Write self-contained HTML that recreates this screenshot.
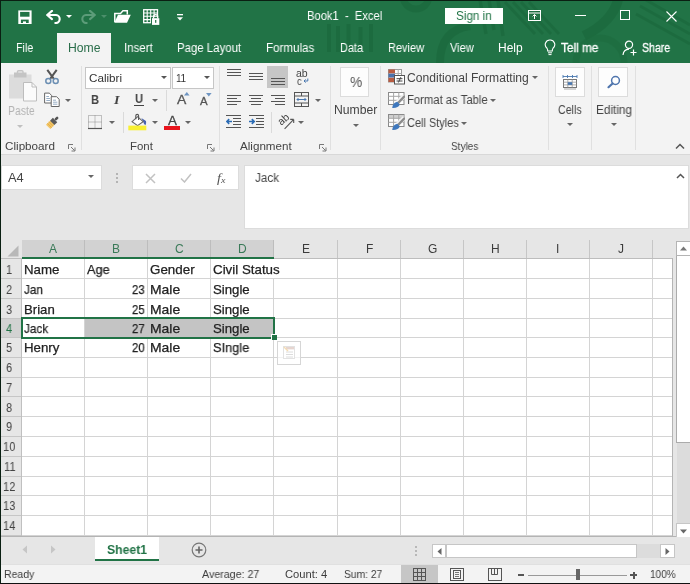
<!DOCTYPE html>
<html><head><meta charset="utf-8"><title>Book1 - Excel</title>
<style>
html,body{margin:0;padding:0;}
body{width:690px;height:584px;position:relative;overflow:hidden;background:#e6e6e6;font-family:"Liberation Sans",sans-serif;}
.r{position:absolute;display:block;}
.t{position:absolute;will-change:transform;white-space:pre;line-height:16px;transform-origin:0 50%;}
</style></head><body>
<div class="r" style="left:0px;top:0px;width:690px;height:63px;background:#217346;"></div>
<svg class="r" style="left:0;top:0" width="690" height="63" viewBox="0 0 690 63"><g stroke="#1a673b" fill="none" opacity="0.6"><path d="M329 24V52M338 26V52M348.5 24V52M360.500 27V52M371 24V52" stroke-width="4"/><path d="M480 0L486 34M489 0L494 30M498 0L503 36" stroke-width="3.5"/><path d="M505 2L535 34M513 2L543 34M521 2L551 34M529 2L559 34" stroke-width="3"/><path d="M618 0Q612 22 584 36" stroke-width="10"/><path d="M640 6L690 34M646 0L690 25M636 14L690 44" stroke-width="3"/><circle cx="416" cy="-4" r="13" stroke-width="7"/><path d="M440 63Q440 30 470 26" stroke-width="8"/><circle cx="600" cy="62" r="24" stroke-width="7" opacity=".6"/></g></svg>
<div class="r" style="left:57px;top:33px;width:54px;height:30px;background:#f3f3f3;"></div>
<span class="t" style="left:16.30px;top:40.00px;font-size:12px;color:#fff;transform:scaleX(0.8895);">File</span>
<span class="t" style="left:67.70px;top:40.00px;font-size:12px;color:#2a6e4a;transform:scaleX(1.0153);">Home</span>
<span class="t" style="left:124.00px;top:40.00px;font-size:12px;color:#fff;transform:scaleX(0.9562);">Insert</span>
<span class="t" style="left:177.30px;top:40.00px;font-size:12px;color:#fff;transform:scaleX(0.9511);">Page Layout</span>
<span class="t" style="left:266.00px;top:40.00px;font-size:12px;color:#fff;transform:scaleX(0.9658);">Formulas</span>
<span class="t" style="left:340.00px;top:40.00px;font-size:12px;color:#fff;transform:scaleX(0.9073);">Data</span>
<span class="t" style="left:388.00px;top:40.00px;font-size:12px;color:#fff;transform:scaleX(0.9149);">Review</span>
<span class="t" style="left:449.60px;top:40.00px;font-size:12px;color:#fff;transform:scaleX(0.9188);">View</span>
<span class="t" style="left:497.80px;top:40.00px;font-size:12px;color:#fff;transform:scaleX(0.9927);">Help</span>
<span class="t" style="left:561.00px;top:40.00px;font-size:12px;color:#fff;transform:scaleX(0.9839);-webkit-text-stroke:0.3px #fff;">Tell me</span>
<span class="t" style="left:641.80px;top:40.00px;font-size:12px;color:#fff;transform:scaleX(0.8806);-webkit-text-stroke:0.3px #fff;">Share</span>
<span class="t" style="left:306.70px;top:8.20px;font-size:12px;color:#fff;transform:scaleX(0.9330);">Book1  -  Excel</span>
<div class="r" style="left:445px;top:8px;width:58px;height:16px;background:#fff;"></div>
<span class="t" style="left:455.60px;top:7.80px;font-size:12px;color:#217346;transform:scaleX(0.9756);">Sign in</span>
<svg class="r" style="left:18px;top:9.5px;" width="14" height="14.5" viewBox="0 0 14 14.5"><rect x="0.3" y="0.4" width="13.3" height="13.7" fill="#fff"/><rect x="2.1" y="1.9" width="9.4" height="4.8" fill="#217346"/><rect x="2.9" y="9.6" width="7.8" height="3.4" fill="#217346"/><rect x="5" y="11.4" width="3" height="1.6" fill="#fff"/></svg>
<svg class="r" style="left:46px;top:9.5px;" width="15" height="14" viewBox="0 0 15 14"><path d="M1.2 5L6 0.9M1.2 5L6 9.1M1.5 5H10A4 4 0 0 1 9.3 13" fill="none" stroke="#fff" stroke-width="2.1" stroke-linecap="round"/></svg>
<svg class="r" style="left:65.5px;top:14.5px;" width="6" height="3" viewBox="0 0 6 3"><path d="M0 0H6L3.0 3Z" fill="#fff"/></svg>
<svg class="r" style="left:80.5px;top:9.5px;" width="15" height="14" viewBox="0 0 15 14"><path d="M13.8 5L9 0.9M13.8 5L9 9.1M13.5 5H5A4 4 0 0 0 5.700 13" fill="none" stroke="#5c9c79" stroke-width="2.1" stroke-linecap="round"/></svg>
<svg class="r" style="left:100.5px;top:14.5px;" width="6" height="3" viewBox="0 0 6 3"><path d="M0 0H6L3.0 3Z" fill="#4c8f6b"/></svg>
<svg class="r" style="left:114px;top:10px;" width="17" height="13" viewBox="0 0 17 13"><path d="M0.8 12V3.400H6.500L9 0.8H13.300V4.500" fill="none" stroke="#fff" stroke-width="1.5"/><path d="M0.3 12.7L4 4.8H16.800L13 12.7Z" fill="#fff"/></svg>
<svg class="r" style="left:143px;top:9px;" width="17" height="16" viewBox="0 0 17 16"><rect x="0.7" y="0.7" width="13.800" height="13" fill="none" stroke="#fff" stroke-width="1.3"/><path d="M0.7 4H14.500M0.7 7.300H14.500M0.7 10.600H9.500M4.200 0.7V13.700M7.700 0.7V13.700M11.100 0.7V8" stroke="#fff" stroke-width="1.1" fill="none"/><rect x="8" y="8.200" width="9" height="7.800" fill="#217346"/><rect x="9" y="9.200" width="7.300" height="6.700" fill="#fff"/><path d="M10.600 9.500V7.600A2 2 0 0 1 14.700 7.600V9.500" fill="none" stroke="#fff" stroke-width="1.3"/><rect x="12.100" y="11" width="1.200" height="2.800" fill="#217346"/></svg>
<svg class="r" style="left:177px;top:13.5px;" width="6" height="7" viewBox="0 0 6 7"><rect x="0" y="0" width="6" height="1.3" fill="#fff"/><path d="M0 3.2H6L3 6.5Z" fill="#fff"/></svg>
<svg class="r" style="left:528px;top:10px;" width="14" height="12" viewBox="0 0 14 12"><rect x="0.5" y="0.5" width="12" height="10" fill="none" stroke="#fff"/><path d="M0.5 3H12.5" stroke="#fff"/><path d="M6.5 9V4.6M4.6 6.4L6.5 4.5L8.4 6.4" fill="none" stroke="#fff"/></svg>
<div class="r" style="left:575px;top:15px;width:11px;height:1px;background:#fff;"></div>
<div class="r" style="left:620px;top:10px;width:10px;height:10px;background:transparent;border:1px solid #fff;box-sizing:border-box;"></div>
<svg class="r" style="left:665.5px;top:10.5px;" width="11" height="11" viewBox="0 0 11 11"><path d="M0.5 0.5L10.5 10.5M10.5 0.5L0.5 10.5" stroke="#fff" stroke-width="1.1"/></svg>
<svg class="r" style="left:544px;top:39px;" width="12" height="17" viewBox="0 0 12 17"><path d="M6 1A4.6 4.6 0 0 1 9 9.2Q8.3 10.2 8.3 12H3.7Q3.7 10.2 3 9.2A4.6 4.6 0 0 1 6 1Z" fill="none" stroke="#fff" stroke-width="1.1"/><path d="M4 13.8H8M4.5 15.6H7.5" stroke="#fff" stroke-width="1"/></svg>
<svg class="r" style="left:622px;top:40px;" width="16" height="16" viewBox="0 0 16 16"><circle cx="7" cy="4.8" r="3.6" fill="none" stroke="#fff" stroke-width="1.2"/><path d="M1 15Q1.5 9.5 7 9.2" fill="none" stroke="#fff" stroke-width="1.2"/><path d="M11.5 9.5V15.5M8.5 12.5H14.5" stroke="#fff" stroke-width="1.2"/></svg>
<div class="r" style="left:0px;top:63px;width:690px;height:91px;background:#f3f3f3;"></div>
<div class="r" style="left:0px;top:154px;width:690px;height:1px;background:#d8d8d8;"></div>
<div class="r" style="left:81px;top:66px;width:1px;height:84px;background:#e0e0e0;"></div>
<div class="r" style="left:219px;top:66px;width:1px;height:84px;background:#e0e0e0;"></div>
<div class="r" style="left:330px;top:66px;width:1px;height:84px;background:#e0e0e0;"></div>
<div class="r" style="left:380px;top:66px;width:1px;height:84px;background:#e0e0e0;"></div>
<div class="r" style="left:548px;top:66px;width:1px;height:84px;background:#e0e0e0;"></div>
<div class="r" style="left:591px;top:66px;width:1px;height:84px;background:#e0e0e0;"></div>
<div class="r" style="left:635px;top:66px;width:1px;height:84px;background:#e0e0e0;"></div>
<span class="t" style="left:5.00px;top:137.94px;font-size:11px;color:#444;transform:scaleX(1.0619);">Clipboard</span>
<span class="t" style="left:129.70px;top:137.94px;font-size:11px;color:#444;transform:scaleX(1.0404);">Font</span>
<span class="t" style="left:240.00px;top:137.94px;font-size:11px;color:#444;transform:scaleX(1.0569);">Alignment</span>
<span class="t" style="left:450.70px;top:137.94px;font-size:11px;color:#444;transform:scaleX(0.9114);">Styles</span>
<svg class="r" style="left:68.0px;top:143.5px;" width="8" height="8" viewBox="0 0 8 8"><path d="M0.5 5V0.5H5" fill="none" stroke="#777" stroke-width="1"/><path d="M3 3L6.5 6.5M7 3.5V7H3.5" fill="none" stroke="#777" stroke-width="1"/></svg>
<svg class="r" style="left:207.0px;top:143.5px;" width="8" height="8" viewBox="0 0 8 8"><path d="M0.5 5V0.5H5" fill="none" stroke="#777" stroke-width="1"/><path d="M3 3L6.5 6.5M7 3.5V7H3.5" fill="none" stroke="#777" stroke-width="1"/></svg>
<svg class="r" style="left:318.5px;top:143.5px;" width="8" height="8" viewBox="0 0 8 8"><path d="M0.5 5V0.5H5" fill="none" stroke="#777" stroke-width="1"/><path d="M3 3L6.5 6.5M7 3.5V7H3.5" fill="none" stroke="#777" stroke-width="1"/></svg>
<svg class="r" style="left:8px;top:70px;" width="30" height="32" viewBox="0 0 30 32"><rect x="1" y="4.5" width="22.5" height="24" fill="#dcdcdc"/><rect x="6" y="2.5" width="12.5" height="5" fill="#c4c4c4"/><rect x="9.5" y="0.8" width="5.5" height="3" rx="1" fill="none" stroke="#c4c4c4" stroke-width="1.4"/><path d="M15.5 12.5H24L28.5 17V31H15.5Z" fill="#fbfbfb" stroke="#bdbdbd" stroke-width="1"/><path d="M24 12.5V17H28.5" fill="none" stroke="#bdbdbd" stroke-width="1"/></svg>
<span class="t" style="left:8.10px;top:103.19px;font-size:12px;color:#b4b4b4;transform:scaleX(0.8701);">Paste</span>
<svg class="r" style="left:17.3px;top:124.5px;" width="6" height="3" viewBox="0 0 6 3"><path d="M0 0H6L3.0 3Z" fill="#c0c0c0"/></svg>
<svg class="r" style="left:44px;top:69px;" width="16" height="16" viewBox="0 0 16 16"><path d="M3.300 0.8L10.800 11.200M12.700 0.8L5.200 11.200" stroke="#555" stroke-width="2" fill="none"/><circle cx="4.300" cy="12.100" r="2.500" fill="#f3f3f3" stroke="#6c8fb3" stroke-width="1.500"/><circle cx="11.700" cy="12.100" r="2.500" fill="#f3f3f3" stroke="#6c8fb3" stroke-width="1.500"/></svg>
<svg class="r" style="left:44px;top:92px;" width="17" height="16" viewBox="0 0 17 16"><path d="M0.6 1.100H5.200L7.700 3.500V11H0.6Z" fill="#fff" stroke="#666" stroke-width="1"/><path d="M2.300 4.500H5M2.300 6.500H6M2.300 8.500H6" stroke="#7d99b8" stroke-width=".8"/><path d="M7.200 4.700H12.500L15.200 7.300V14.500H7.200Z" fill="#fff" stroke="#666" stroke-width="1"/><path d="M9 8.200H12M9 10.200H13.400M9 12.200H13.400" stroke="#7d99b8" stroke-width=".8"/></svg>
<svg class="r" style="left:65.3px;top:98.5px;" width="6" height="3" viewBox="0 0 6 3"><path d="M0 0H6L3.0 3Z" fill="#666"/></svg>
<svg class="r" style="left:45px;top:114px;" width="17" height="16" viewBox="0 0 17 16"><g transform="translate(8.300,7.800) rotate(-45)"><rect x="-7.200" y="-3.100" width="6" height="6.200" fill="#f2c566"/><path d="M-5.300 -3.100V3.100M-3.300 -3.100V3.100" stroke="#e3ab45" stroke-width=".8"/><rect x="-1.500" y="-3.100" width="4" height="6.200" fill="#5a5a5a"/><rect x="2.500" y="-1.300" width="4.200" height="2.600" rx="1.200" fill="#555"/></g></svg>
<div class="r" style="left:85px;top:67px;width:86px;height:22px;background:#fff;border:1px solid #c6c6c6;box-sizing:border-box;"></div>
<div class="r" style="left:172px;top:67px;width:42px;height:22px;background:#fff;border:1px solid #c6c6c6;box-sizing:border-box;"></div>
<span class="t" style="left:88.50px;top:70.34px;font-size:11px;color:#333;transform:scaleX(1.0618);">Calibri</span>
<span class="t" style="left:175.50px;top:70.34px;font-size:11px;color:#333;transform:scaleX(0.8757);">11</span>
<svg class="r" style="left:161.0px;top:76.0px;" width="6" height="3" viewBox="0 0 6 3"><path d="M0 0H6L3.0 3Z" fill="#555"/></svg>
<svg class="r" style="left:204.0px;top:76.0px;" width="6" height="3" viewBox="0 0 6 3"><path d="M0 0H6L3.0 3Z" fill="#555"/></svg>
<span class="t" style="left:91.00px;top:91.50px;font-size:13px;color:#444;transform:scaleX(0.8521);font-weight:bold;">B</span>
<span class="t" style="left:113.50px;top:91.50px;font-size:13px;color:#444;transform:scaleX(1.0871);font-weight:bold;font-style:italic;font-family:'Liberation Serif',serif;">I</span>
<span class="t" style="left:134.80px;top:90.99px;font-size:12px;color:#444;transform:scaleX(0.9346);font-weight:bold;">U</span>
<div class="r" style="left:134px;top:105px;width:10px;height:1px;background:#444;"></div>
<svg class="r" style="left:152.0px;top:98.5px;" width="6" height="3" viewBox="0 0 6 3"><path d="M0 0H6L3.0 3Z" fill="#666"/></svg>
<div class="r" style="left:166px;top:90px;width:1px;height:21px;background:#dadada;"></div>
<span class="t" style="left:177.00px;top:92.45px;font-size:13px;color:#555;transform:scaleX(1.0725);-webkit-text-stroke:0.3px #555;">A</span>
<svg class="r" style="left:184.4px;top:92.3px;" width="6" height="4" viewBox="0 0 6 4"><path d="M0 3.5H5.6L2.8 0Z" fill="#6f95c2"/></svg>
<span class="t" style="left:199.70px;top:93.14px;font-size:11px;color:#555;transform:scaleX(1.0359);-webkit-text-stroke:0.3px #555;">A</span>
<svg class="r" style="left:206.4px;top:92.5px;" width="6" height="4" viewBox="0 0 6 4"><path d="M0 0H5.6L2.8 3.5Z" fill="#6f95c2"/></svg>
<svg class="r" style="left:88px;top:115px;" width="15" height="15" viewBox="0 0 15 15"><rect x="0.5" y="0.5" width="13" height="13" fill="none" stroke="#8a8a8a" stroke-width="1" stroke-dasharray="1 1"/><path d="M7 0.5V13.5M0.5 7H13.5" stroke="#8a8a8a" stroke-width="1" stroke-dasharray="1 1"/><path d="M0 13.5H14" stroke="#555" stroke-width="1.2"/></svg>
<svg class="r" style="left:109.0px;top:121.0px;" width="6" height="3" viewBox="0 0 6 3"><path d="M0 0H6L3.0 3Z" fill="#666"/></svg>
<div class="r" style="left:123px;top:112px;width:1px;height:21px;background:#dadada;"></div>
<svg class="r" style="left:128px;top:113px;" width="19" height="19" viewBox="0 0 19 19"><path d="M13.400 5L18 8Q18.600 10.600 17.500 12.200Q15.500 11 15.100 8.600Z" fill="#4863b0"/><path d="M4.100 8.600L9.600 3.700L15.100 8.600L9.600 12.600Z" fill="#fff" stroke="#666" stroke-width="1.1"/><path d="M7.800 6.200V2.800A1.400 1.400 0 0 1 10.600 2.800V7" fill="none" stroke="#555" stroke-width="1.1"/><rect x="0.3" y="12.600" width="18" height="4.700" fill="#f8f032"/></svg>
<svg class="r" style="left:151.5px;top:121.0px;" width="6" height="3" viewBox="0 0 6 3"><path d="M0 0H6L3.0 3Z" fill="#666"/></svg>
<span class="t" style="left:167.50px;top:113.02px;font-size:12.5px;color:#444;transform:scaleX(1.0675);-webkit-text-stroke:0.3px #444;">A</span>
<div class="r" style="left:164px;top:125.5px;width:16px;height:4.6px;background:#e8141c;"></div>
<svg class="r" style="left:185.0px;top:121.0px;" width="6" height="3" viewBox="0 0 6 3"><path d="M0 0H6L3.0 3Z" fill="#666"/></svg>
<div class="r" style="left:227px;top:69px;width:14px;height:1px;background:#555;"></div>
<div class="r" style="left:227px;top:72px;width:14px;height:1px;background:#555;"></div>
<div class="r" style="left:227px;top:75px;width:14px;height:1px;background:#555;"></div>
<div class="r" style="left:249px;top:73px;width:14px;height:1px;background:#555;"></div>
<div class="r" style="left:249px;top:76px;width:14px;height:1px;background:#555;"></div>
<div class="r" style="left:249px;top:79px;width:14px;height:1px;background:#555;"></div>
<div class="r" style="left:267px;top:66px;width:21px;height:22px;background:#c6c6c6;"></div>
<div class="r" style="left:271px;top:78px;width:14px;height:1px;background:#555;"></div>
<div class="r" style="left:271px;top:81px;width:14px;height:1px;background:#555;"></div>
<div class="r" style="left:271px;top:84px;width:14px;height:1px;background:#555;"></div>
<span class="t" style="left:296.00px;top:65.31px;font-size:10.5px;color:#444;transform:scaleX(0.9761);">ab</span>
<span class="t" style="left:296.60px;top:72.51px;font-size:10.5px;color:#444;transform:scaleX(0.8762);">c</span>
<svg class="r" style="left:302.5px;top:78px;" width="6" height="6" viewBox="0 0 6 6"><path d="M4.800 0.5V3H1.2M2.600 1.400L1 3L2.600 4.600" fill="none" stroke="#4a78b0" stroke-width="1"/></svg>
<div class="r" style="left:227px;top:95px;width:14px;height:1px;background:#555;"></div>
<div class="r" style="left:227px;top:98px;width:10px;height:1px;background:#555;"></div>
<div class="r" style="left:227px;top:101px;width:14px;height:1px;background:#555;"></div>
<div class="r" style="left:227px;top:104px;width:10px;height:1px;background:#555;"></div>
<div class="r" style="left:249.0px;top:95px;width:14px;height:1px;background:#555;"></div>
<div class="r" style="left:251.0px;top:98px;width:10px;height:1px;background:#555;"></div>
<div class="r" style="left:249.0px;top:101px;width:14px;height:1px;background:#555;"></div>
<div class="r" style="left:251.0px;top:104px;width:10px;height:1px;background:#555;"></div>
<div class="r" style="left:271px;top:95px;width:14px;height:1px;background:#555;"></div>
<div class="r" style="left:275px;top:98px;width:10px;height:1px;background:#555;"></div>
<div class="r" style="left:271px;top:101px;width:14px;height:1px;background:#555;"></div>
<div class="r" style="left:275px;top:104px;width:10px;height:1px;background:#555;"></div>
<svg class="r" style="left:294px;top:92px;" width="15" height="15" viewBox="0 0 15 15"><rect x="0.5" y="0.5" width="14" height="14" fill="none" stroke="#555"/><path d="M0.5 4H14.5M0.5 11H14.5M7.5 0.5V4M7.5 11V14.5" stroke="#555" fill="none"/><path d="M3 7.5H12M4.5 6L3 7.5L4.5 9M10.5 6L12 7.5L10.5 9" stroke="#4a78b0" fill="none"/></svg>
<svg class="r" style="left:315.0px;top:98.5px;" width="6" height="3" viewBox="0 0 6 3"><path d="M0 0H6L3.0 3Z" fill="#666"/></svg>
<svg class="r" style="left:226px;top:115px;" width="15" height="13" viewBox="0 0 15 13"><path d="M0 0.5H15M7 3.5H15M7 6.5H15M7 9.5H15M0 12.5H15" stroke="#555" fill="none"/><path d="M6 6.5H1M3.2 4.2L0.8 6.5L3.2 8.8" stroke="#2b6cb5" stroke-width="1.6" fill="none"/></svg>
<svg class="r" style="left:248.5px;top:115px;" width="15" height="13" viewBox="0 0 15 13"><path d="M0 0.5H15M7 3.5H15M7 6.5H15M7 9.5H15M0 12.5H15" stroke="#555" fill="none"/><path d="M0 6.5H5M2.8 4.2L5.2 6.5L2.8 8.8" stroke="#2b6cb5" stroke-width="1.6" fill="none"/></svg>
<div class="r" style="left:271px;top:112px;width:1px;height:21px;background:#dadada;"></div>
<svg class="r" style="left:276px;top:112px;" width="20" height="19" viewBox="0 0 20 19"><text x="0" y="0" font-family="Liberation Sans, sans-serif" font-size="10.5" fill="#444" transform="translate(5.300,13.800) rotate(-42)">ab</text><path d="M8.600 16.800L17.500 7.600M17.700 7.400H14.200M17.700 7.400V10.900" stroke="#555" stroke-width="1.1" fill="none"/></svg>
<svg class="r" style="left:297.7px;top:121.0px;" width="6" height="3" viewBox="0 0 6 3"><path d="M0 0H6L3.0 3Z" fill="#666"/></svg>
<div class="r" style="left:340px;top:67px;width:29px;height:30px;background:#fdfdfd;border:1px solid #dcdcdc;box-sizing:border-box;"></div>
<span class="t" style="left:349.70px;top:74.00px;font-size:15px;color:#555;transform:scaleX(0.9222);">%</span>
<span class="t" style="left:334.00px;top:101.99px;font-size:12px;color:#444;transform:scaleX(1.0145);">Number</span>
<svg class="r" style="left:352.8px;top:123.5px;" width="6" height="3" viewBox="0 0 6 3"><path d="M0 0H6L3.0 3Z" fill="#666"/></svg>
<svg class="r" style="left:388px;top:69px;" width="17" height="17" viewBox="0 0 17 17"><rect x="0.5" y="0.5" width="13" height="12.5" fill="#fff" stroke="#9a9a9a"/><rect x="0.5" y="0.5" width="6.500" height="4" fill="#b95c42"/><rect x="0.5" y="4.600" width="6.500" height="4" fill="#4a72ad"/><rect x="0.5" y="8.800" width="6.500" height="4.200" fill="#b95c42"/><path d="M7 4.500H13.500M7 8.700H13.500M10.200 0.5V13" stroke="#b0b0b0" fill="none"/><rect x="6.500" y="6.500" width="10" height="8.500" fill="#fff" stroke="#555"/><path d="M8.500 9.700H14.500M8.500 12H14.500M12.800 8.200L10.400 13.500" stroke="#444" stroke-width="1" fill="none"/></svg>
<svg class="r" style="left:388px;top:91.5px;" width="17" height="17" viewBox="0 0 17 17"><rect x="0.5" y="0.5" width="15.500" height="12" fill="#fff" stroke="#8a8a8a"/><path d="M0.5 4.300H16M0.5 8.300H16M5.600 0.5V12.500M10.800 0.5V12.500" stroke="#a6a6a6" fill="none"/><path d="M9.500 10.500L16.300 3.800" stroke="#f3f3f3" stroke-width="4.500"/><path d="M10 11L16.200 4.600" stroke="#8c8c8c" stroke-width="2.400" stroke-linecap="round"/><path d="M4.200 16Q4.800 10.800 9.200 9.800L11.800 12.600Q10.500 16.300 4.200 16Z" fill="#3f78bd"/></svg>
<svg class="r" style="left:388px;top:114px;" width="17" height="17" viewBox="0 0 17 17"><rect x="0.5" y="0.5" width="15.500" height="12" fill="#fff" stroke="#8a8a8a"/><rect x="1" y="1" width="14.500" height="3" fill="#d0d0d0"/><path d="M0.5 4.300H16M0.5 8.300H16M5.600 0.5V12.500M10.800 0.5V12.500" stroke="#a6a6a6" fill="none"/><path d="M9.500 10.500L16.300 3.800" stroke="#f3f3f3" stroke-width="4.500"/><path d="M10 11L16.200 4.600" stroke="#8c8c8c" stroke-width="2.400" stroke-linecap="round"/><path d="M4.200 16Q4.800 10.800 9.200 9.800L11.800 12.600Q10.500 16.300 4.200 16Z" fill="#3f78bd"/></svg>
<span class="t" style="left:407.00px;top:69.50px;font-size:12px;color:#444;transform:scaleX(1.0088);">Conditional Formatting</span>
<span class="t" style="left:407.00px;top:92.00px;font-size:12px;color:#444;transform:scaleX(0.9392);">Format as Table</span>
<span class="t" style="left:407.00px;top:114.80px;font-size:12px;color:#444;transform:scaleX(0.9138);">Cell Styles</span>
<svg class="r" style="left:531.5px;top:76.0px;" width="6" height="3" viewBox="0 0 6 3"><path d="M0 0H6L3.0 3Z" fill="#666"/></svg>
<svg class="r" style="left:489.7px;top:98.5px;" width="6" height="3" viewBox="0 0 6 3"><path d="M0 0H6L3.0 3Z" fill="#666"/></svg>
<svg class="r" style="left:461.3px;top:121.5px;" width="6" height="3" viewBox="0 0 6 3"><path d="M0 0H6L3.0 3Z" fill="#666"/></svg>
<div class="r" style="left:555px;top:67px;width:30px;height:30px;background:#fdfdfd;border:1px solid #dcdcdc;box-sizing:border-box;"></div>
<div class="r" style="left:598px;top:67px;width:30px;height:30px;background:#fdfdfd;border:1px solid #dcdcdc;box-sizing:border-box;"></div>
<svg class="r" style="left:562px;top:74px;" width="16" height="16" viewBox="0 0 16 16"><path d="M1 2.5H15M1 1V4M15 1V4M5.5 1V4M10.5 1V4" stroke="#4a78b0" stroke-width=".9" fill="none"/><rect x="1.5" y="5.5" width="13" height="8" fill="#fff" stroke="#777"/><path d="M1.5 8.2H14.5M1.5 10.9H14.5M5.8 5.5V13.5M10.2 5.5V13.5" stroke="#999" stroke-width=".8"/><rect x="5.8" y="8.2" width="4.4" height="2.7" fill="#4a78b0"/><path d="M2 15H14" stroke="#aaa"/></svg>
<svg class="r" style="left:605px;top:74px;" width="16" height="16" viewBox="0 0 16 16"><circle cx="10.5" cy="6.500" r="3.9" fill="#fff" stroke="#4f75ad" stroke-width="1.5"/><path d="M7.600 9.500L3.500 13.200" stroke="#4f75ad" stroke-width="2.2" stroke-linecap="round"/></svg>
<span class="t" style="left:558.30px;top:101.99px;font-size:12px;color:#444;transform:scaleX(0.8885);">Cells</span>
<span class="t" style="left:595.60px;top:101.99px;font-size:12px;color:#444;transform:scaleX(0.9811);">Editing</span>
<svg class="r" style="left:567.0px;top:123.0px;" width="6" height="3" viewBox="0 0 6 3"><path d="M0 0H6L3.0 3Z" fill="#666"/></svg>
<svg class="r" style="left:610.5px;top:123.0px;" width="6" height="3" viewBox="0 0 6 3"><path d="M0 0H6L3.0 3Z" fill="#666"/></svg>
<svg class="r" style="left:675px;top:143px;" width="10" height="7" viewBox="0 0 10 7"><path d="M1 5.5L5 1.5L9 5.5" stroke="#555" stroke-width="1.5" fill="none"/></svg>
<div class="r" style="left:0px;top:155px;width:690px;height:85px;background:#e6e6e6;"></div>
<div class="r" style="left:1px;top:165px;width:101px;height:25px;background:#fff;border:1px solid #dcdcdc;box-sizing:border-box;"></div>
<span class="t" style="left:8.00px;top:170.30px;font-size:12px;color:#444;transform:scaleX(1.0696);">A4</span>
<svg class="r" style="left:88.0px;top:175.0px;" width="6" height="3" viewBox="0 0 6 3"><path d="M0 0H6L3.0 3Z" fill="#666"/></svg>
<div class="r" style="left:116px;top:173px;width:1.5px;height:1.5px;background:#b4b4b4;"></div>
<div class="r" style="left:116px;top:177px;width:1.5px;height:1.5px;background:#b4b4b4;"></div>
<div class="r" style="left:116px;top:181px;width:1.5px;height:1.5px;background:#b4b4b4;"></div>
<div class="r" style="left:132px;top:165px;width:107px;height:25px;background:#fff;border:1px solid #dcdcdc;box-sizing:border-box;"></div>
<svg class="r" style="left:144.5px;top:172.5px;" width="11" height="11" viewBox="0 0 11 11"><path d="M1 1L10 10M10 1L1 10" stroke="#c2c2c2" stroke-width="1.5"/></svg>
<svg class="r" style="left:180px;top:173px;" width="12" height="10" viewBox="0 0 12 10"><path d="M1 5.5L4.5 9L11 1" stroke="#c2c2c2" stroke-width="1.5" fill="none"/></svg>
<span class="t" style="left:217.00px;top:169.50px;font-size:13px;color:#555;transform:scaleX(1.1075);font-style:italic;font-family:'Liberation Serif',serif;">f</span>
<span class="t" style="left:221.00px;top:172.00px;font-size:9px;color:#555;transform:scaleX(1.1265);font-style:italic;font-family:'Liberation Serif',serif;">x</span>
<div class="r" style="left:244px;top:165px;width:445px;height:64px;background:#fff;border:1px solid #dcdcdc;box-sizing:border-box;"></div>
<span class="t" style="left:255.00px;top:170.00px;font-size:12.5px;color:#444;transform:scaleX(0.9338);">Jack</span>
<svg class="r" style="left:675.5px;top:173px;" width="9" height="6" viewBox="0 0 9 6"><path d="M1 5L4.5 1.5L8 5" stroke="#555" stroke-width="1.5" fill="none"/></svg>
<div class="r" style="left:1px;top:240px;width:672px;height:297px;background:#fff;"></div>
<div class="r" style="left:1px;top:240px;width:672px;height:18px;background:#e6e6e6;"></div>
<div class="r" style="left:1px;top:259px;width:20px;height:277px;background:#e6e6e6;"></div>
<div class="r" style="left:22px;top:240px;width:251px;height:18px;background:#d2d2d2;"></div>
<div class="r" style="left:1px;top:319px;width:20px;height:18px;background:#d2d2d2;"></div>
<svg class="r" style="left:7px;top:245px;" width="12" height="12" viewBox="0 0 12 12"><path d="M11.5 0.5V11.5H0.5Z" fill="#b8b8b8"/></svg>
<span class="t" style="left:49.20px;top:241.30px;font-size:12px;color:#3a7a58;transform:scaleX(0.9500);">A</span>
<span class="t" style="left:112.20px;top:241.30px;font-size:12px;color:#3a7a58;transform:scaleX(0.9500);">B</span>
<span class="t" style="left:174.88px;top:241.30px;font-size:12px;color:#3a7a58;transform:scaleX(0.9500);">C</span>
<span class="t" style="left:237.88px;top:241.30px;font-size:12px;color:#3a7a58;transform:scaleX(0.9500);">D</span>
<span class="t" style="left:301.70px;top:241.30px;font-size:12px;color:#3c3c3c;transform:scaleX(0.9500);">E</span>
<span class="t" style="left:365.52px;top:241.30px;font-size:12px;color:#3c3c3c;transform:scaleX(0.9500);">F</span>
<span class="t" style="left:427.57px;top:241.30px;font-size:12px;color:#3c3c3c;transform:scaleX(0.9500);">G</span>
<span class="t" style="left:490.88px;top:241.30px;font-size:12px;color:#3c3c3c;transform:scaleX(0.9500);">H</span>
<span class="t" style="left:556.42px;top:241.30px;font-size:12px;color:#3c3c3c;transform:scaleX(0.9500);">I</span>
<span class="t" style="left:618.15px;top:241.30px;font-size:12px;color:#3c3c3c;transform:scaleX(0.9500);">J</span>
<span class="t" style="left:5.78px;top:261.65px;font-size:13px;color:#444;transform:scaleX(0.8600);">1</span>
<span class="t" style="left:5.78px;top:281.65px;font-size:13px;color:#444;transform:scaleX(0.8600);">2</span>
<span class="t" style="left:5.78px;top:301.65px;font-size:13px;color:#444;transform:scaleX(0.8600);">3</span>
<span class="t" style="left:5.78px;top:320.65px;font-size:13px;color:#217346;transform:scaleX(0.8600);">4</span>
<span class="t" style="left:5.78px;top:339.65px;font-size:13px;color:#444;transform:scaleX(0.8600);">5</span>
<span class="t" style="left:5.78px;top:359.65px;font-size:13px;color:#444;transform:scaleX(0.8600);">6</span>
<span class="t" style="left:5.78px;top:379.65px;font-size:13px;color:#444;transform:scaleX(0.8600);">7</span>
<span class="t" style="left:5.78px;top:399.65px;font-size:13px;color:#444;transform:scaleX(0.8600);">8</span>
<span class="t" style="left:5.78px;top:418.65px;font-size:13px;color:#444;transform:scaleX(0.8600);">9</span>
<span class="t" style="left:2.86px;top:438.65px;font-size:13px;color:#444;transform:scaleX(0.8600);">10</span>
<span class="t" style="left:3.69px;top:458.65px;font-size:13px;color:#444;transform:scaleX(0.8600);">11</span>
<span class="t" style="left:2.86px;top:478.65px;font-size:13px;color:#444;transform:scaleX(0.8600);">12</span>
<span class="t" style="left:2.86px;top:497.65px;font-size:13px;color:#444;transform:scaleX(0.8600);">13</span>
<span class="t" style="left:2.86px;top:517.65px;font-size:13px;color:#444;transform:scaleX(0.8600);">14</span>
<div class="r" style="left:84px;top:259px;width:1px;height:277px;background:#d4d4d4;"></div>
<div class="r" style="left:147px;top:259px;width:1px;height:277px;background:#d4d4d4;"></div>
<div class="r" style="left:210px;top:259px;width:1px;height:277px;background:#d4d4d4;"></div>
<div class="r" style="left:273px;top:259px;width:1px;height:277px;background:#d4d4d4;"></div>
<div class="r" style="left:337px;top:259px;width:1px;height:277px;background:#d4d4d4;"></div>
<div class="r" style="left:400px;top:259px;width:1px;height:277px;background:#d4d4d4;"></div>
<div class="r" style="left:463px;top:259px;width:1px;height:277px;background:#d4d4d4;"></div>
<div class="r" style="left:526px;top:259px;width:1px;height:277px;background:#d4d4d4;"></div>
<div class="r" style="left:589px;top:259px;width:1px;height:277px;background:#d4d4d4;"></div>
<div class="r" style="left:652px;top:259px;width:1px;height:277px;background:#d4d4d4;"></div>
<div class="r" style="left:84px;top:240px;width:1px;height:18px;background:#bdbdbd;"></div>
<div class="r" style="left:147px;top:240px;width:1px;height:18px;background:#bdbdbd;"></div>
<div class="r" style="left:210px;top:240px;width:1px;height:18px;background:#bdbdbd;"></div>
<div class="r" style="left:273px;top:240px;width:1px;height:18px;background:#bdbdbd;"></div>
<div class="r" style="left:337px;top:240px;width:1px;height:18px;background:#c6c6c6;"></div>
<div class="r" style="left:400px;top:240px;width:1px;height:18px;background:#c6c6c6;"></div>
<div class="r" style="left:463px;top:240px;width:1px;height:18px;background:#c6c6c6;"></div>
<div class="r" style="left:526px;top:240px;width:1px;height:18px;background:#c6c6c6;"></div>
<div class="r" style="left:589px;top:240px;width:1px;height:18px;background:#c6c6c6;"></div>
<div class="r" style="left:652px;top:240px;width:1px;height:18px;background:#c6c6c6;"></div>
<div class="r" style="left:21px;top:259px;width:1px;height:277px;background:#c0c0c0;"></div>
<div class="r" style="left:22px;top:278px;width:651px;height:1px;background:#d4d4d4;"></div>
<div class="r" style="left:1px;top:278px;width:20px;height:1px;background:#c6c6c6;"></div>
<div class="r" style="left:22px;top:298px;width:651px;height:1px;background:#d4d4d4;"></div>
<div class="r" style="left:1px;top:298px;width:20px;height:1px;background:#c6c6c6;"></div>
<div class="r" style="left:22px;top:318px;width:651px;height:1px;background:#d4d4d4;"></div>
<div class="r" style="left:1px;top:318px;width:20px;height:1px;background:#c6c6c6;"></div>
<div class="r" style="left:22px;top:337px;width:651px;height:1px;background:#d4d4d4;"></div>
<div class="r" style="left:1px;top:337px;width:20px;height:1px;background:#c6c6c6;"></div>
<div class="r" style="left:22px;top:357px;width:651px;height:1px;background:#d4d4d4;"></div>
<div class="r" style="left:1px;top:357px;width:20px;height:1px;background:#c6c6c6;"></div>
<div class="r" style="left:22px;top:377px;width:651px;height:1px;background:#d4d4d4;"></div>
<div class="r" style="left:1px;top:377px;width:20px;height:1px;background:#c6c6c6;"></div>
<div class="r" style="left:22px;top:396px;width:651px;height:1px;background:#d4d4d4;"></div>
<div class="r" style="left:1px;top:396px;width:20px;height:1px;background:#c6c6c6;"></div>
<div class="r" style="left:22px;top:416px;width:651px;height:1px;background:#d4d4d4;"></div>
<div class="r" style="left:1px;top:416px;width:20px;height:1px;background:#c6c6c6;"></div>
<div class="r" style="left:22px;top:436px;width:651px;height:1px;background:#d4d4d4;"></div>
<div class="r" style="left:1px;top:436px;width:20px;height:1px;background:#c6c6c6;"></div>
<div class="r" style="left:22px;top:456px;width:651px;height:1px;background:#d4d4d4;"></div>
<div class="r" style="left:1px;top:456px;width:20px;height:1px;background:#c6c6c6;"></div>
<div class="r" style="left:22px;top:476px;width:651px;height:1px;background:#d4d4d4;"></div>
<div class="r" style="left:1px;top:476px;width:20px;height:1px;background:#c6c6c6;"></div>
<div class="r" style="left:22px;top:495px;width:651px;height:1px;background:#d4d4d4;"></div>
<div class="r" style="left:1px;top:495px;width:20px;height:1px;background:#c6c6c6;"></div>
<div class="r" style="left:22px;top:515px;width:651px;height:1px;background:#d4d4d4;"></div>
<div class="r" style="left:1px;top:515px;width:20px;height:1px;background:#c6c6c6;"></div>
<div class="r" style="left:22px;top:535px;width:651px;height:1px;background:#d4d4d4;"></div>
<div class="r" style="left:1px;top:535px;width:20px;height:1px;background:#c6c6c6;"></div>
<div class="r" style="left:273px;top:259px;width:1px;height:19px;background:#fff;"></div>
<div class="r" style="left:1px;top:258px;width:672px;height:1px;background:#bdbdbd;"></div>
<div class="r" style="left:22px;top:257px;width:252px;height:2px;background:#217346;"></div>
<div class="r" style="left:673px;top:240px;width:4px;height:297px;background:#e6e6e6;"></div>
<div class="r" style="left:0px;top:536px;width:690px;height:1px;background:#b4b4b4;"></div>
<div class="r" style="left:85px;top:319px;width:188px;height:18px;background:#c4c4c4;"></div>
<span class="t" style="left:24.10px;top:261.65px;font-size:13px;color:#222;transform:scaleX(1.0209);-webkit-text-stroke:0.25px #222;">Name</span>
<span class="t" style="left:87.40px;top:261.65px;font-size:13px;color:#222;transform:scaleX(0.9771);-webkit-text-stroke:0.25px #222;">Age</span>
<span class="t" style="left:150.20px;top:261.65px;font-size:13px;color:#222;transform:scaleX(1.0286);-webkit-text-stroke:0.25px #222;">Gender</span>
<span class="t" style="left:213.30px;top:261.65px;font-size:13px;color:#222;transform:scaleX(1.0259);-webkit-text-stroke:0.25px #222;">Civil Status</span>
<span class="t" style="left:24.10px;top:281.65px;font-size:13px;color:#222;transform:scaleX(0.9017);-webkit-text-stroke:0.25px #222;">Jan</span>
<span class="t" style="left:132.00px;top:281.65px;font-size:13px;color:#222;transform:scaleX(0.8783);-webkit-text-stroke:0.25px #222;">23</span>
<span class="t" style="left:150.20px;top:281.65px;font-size:13px;color:#222;transform:scaleX(1.0718);-webkit-text-stroke:0.25px #222;">Male</span>
<span class="t" style="left:213.30px;top:281.65px;font-size:13px;color:#222;transform:scaleX(1.0156);-webkit-text-stroke:0.25px #222;">Single</span>
<span class="t" style="left:24.10px;top:301.65px;font-size:13px;color:#222;transform:scaleX(1.0116);-webkit-text-stroke:0.25px #222;">Brian</span>
<span class="t" style="left:132.00px;top:301.65px;font-size:13px;color:#222;transform:scaleX(0.8783);-webkit-text-stroke:0.25px #222;">25</span>
<span class="t" style="left:150.20px;top:301.65px;font-size:13px;color:#222;transform:scaleX(1.0718);-webkit-text-stroke:0.25px #222;">Male</span>
<span class="t" style="left:213.30px;top:301.65px;font-size:13px;color:#222;transform:scaleX(1.0156);-webkit-text-stroke:0.25px #222;">Single</span>
<span class="t" style="left:24.10px;top:320.65px;font-size:13px;color:#222;transform:scaleX(0.9016);-webkit-text-stroke:0.25px #222;">Jack</span>
<span class="t" style="left:132.00px;top:320.65px;font-size:13px;color:#222;transform:scaleX(0.8783);-webkit-text-stroke:0.25px #222;">27</span>
<span class="t" style="left:150.20px;top:320.65px;font-size:13px;color:#222;transform:scaleX(1.0718);-webkit-text-stroke:0.25px #222;">Male</span>
<span class="t" style="left:213.30px;top:320.65px;font-size:13px;color:#222;transform:scaleX(1.0156);-webkit-text-stroke:0.25px #222;">Single</span>
<span class="t" style="left:24.10px;top:339.65px;font-size:13px;color:#222;transform:scaleX(1.0209);-webkit-text-stroke:0.25px #222;">Henry</span>
<span class="t" style="left:132.00px;top:339.65px;font-size:13px;color:#222;transform:scaleX(0.8783);-webkit-text-stroke:0.25px #222;">20</span>
<span class="t" style="left:150.20px;top:339.65px;font-size:13px;color:#222;transform:scaleX(1.0718);-webkit-text-stroke:0.25px #222;">Male</span>
<span class="t" style="left:213.30px;top:339.65px;font-size:13px;color:#222;transform:scaleX(0.9821);-webkit-text-stroke:0.25px #222;">SIngle</span>
<div class="r" style="left:21px;top:317px;width:254px;height:22px;background:transparent;border:2px solid #217346;box-sizing:border-box;"></div>
<div class="r" style="left:271px;top:334px;width:6px;height:6px;background:#fff;"></div>
<div class="r" style="left:272px;top:335px;width:5px;height:5px;background:#217346;"></div>
<div class="r" style="left:277px;top:341px;width:24px;height:24px;background:rgba(255,255,255,.7);border:1px solid #d6d6d6;box-sizing:border-box;"></div>
<svg class="r" style="left:283px;top:346px;" width="13" height="14" viewBox="0 0 13 14"><rect x="0.5" y="0.5" width="11" height="12" fill="#fff" stroke="#e2e2e2"/><rect x="3" y="1" width="8" height="2.4" fill="#e6d5d0"/><path d="M3 6H10M3 8.5H10M3 11H10" stroke="#dcdcdc"/><path d="M1 1L5 5" stroke="#f3dcb4" stroke-width="1.5"/></svg>
<div class="r" style="left:672px;top:258px;width:1px;height:279px;background:#b4b4b4;"></div>
<div class="r" style="left:677px;top:241px;width:13px;height:296px;background:#dcdcdc;"></div>
<div class="r" style="left:676px;top:241px;width:14px;height:15px;background:#fff;border:1px solid #b4b4b4;border-right:none;box-sizing:border-box;"></div>
<div class="r" style="left:676px;top:256px;width:14px;height:187px;background:#fff;border-left:1px solid #ababab;border-bottom:1px solid #ababab;box-sizing:border-box;"></div>
<svg class="r" style="left:680px;top:246px;" width="7" height="5" viewBox="0 0 7 5"><path d="M0 4.5H7L3.5 0.5Z" fill="#777"/></svg>
<div class="r" style="left:676px;top:523px;width:14px;height:14px;background:#fff;border-top:1px solid #c6c6c6;border-left:1px solid #c6c6c6;box-sizing:border-box;"></div>
<svg class="r" style="left:680px;top:528.5px;" width="7" height="5" viewBox="0 0 7 5"><path d="M0 0.5H7L3.5 4.5Z" fill="#666"/></svg>
<div class="r" style="left:0px;top:537px;width:690px;height:27px;background:#e6e6e6;"></div>
<svg class="r" style="left:22px;top:545px;" width="6" height="9" viewBox="0 0 6 9"><path d="M5 0.5V8.5L0.5 4.5Z" fill="#c6c6c6"/></svg>
<svg class="r" style="left:50px;top:545px;" width="6" height="9" viewBox="0 0 6 9"><path d="M1 0.5V8.5L5.5 4.5Z" fill="#c6c6c6"/></svg>
<div class="r" style="left:95px;top:537px;width:64px;height:23px;background:#fff;"></div>
<div class="r" style="left:95px;top:559px;width:64px;height:2px;background:#217346;"></div>
<span class="t" style="left:106.70px;top:542.00px;font-size:12.5px;color:#217346;transform:scaleX(0.9759);font-weight:bold;">Sheet1</span>
<svg class="r" style="left:191px;top:542px;" width="16" height="16" viewBox="0 0 16 16"><circle cx="8" cy="8" r="6.8" fill="none" stroke="#777" stroke-width="1.2"/><path d="M8 4.5V11.5M4.5 8H11.5" stroke="#666" stroke-width="1.6"/></svg>
<div class="r" style="left:415px;top:546px;width:1.5px;height:1.5px;background:#b8b8b8;"></div>
<div class="r" style="left:415px;top:550px;width:1.5px;height:1.5px;background:#b8b8b8;"></div>
<div class="r" style="left:415px;top:554px;width:1.5px;height:1.5px;background:#b8b8b8;"></div>
<div class="r" style="left:432px;top:544px;width:243px;height:14px;background:#dcdcdc;"></div>
<div class="r" style="left:432px;top:544px;width:14px;height:14px;background:#fff;border:1px solid #c6c6c6;box-sizing:border-box;"></div>
<div class="r" style="left:446px;top:544px;width:191px;height:14px;background:#fff;border:1px solid #c6c6c6;box-sizing:border-box;"></div>
<div class="r" style="left:660px;top:544px;width:15px;height:14px;background:#fff;border:1px solid #c6c6c6;box-sizing:border-box;"></div>
<svg class="r" style="left:437px;top:547.5px;" width="5" height="7" viewBox="0 0 5 7"><path d="M4.5 0V7L0.5 3.5Z" fill="#666"/></svg>
<svg class="r" style="left:665px;top:547.5px;" width="5" height="7" viewBox="0 0 5 7"><path d="M0.5 0V7L4.5 3.5Z" fill="#666"/></svg>
<div class="r" style="left:0px;top:564px;width:690px;height:19px;background:#f3f3f3;"></div>
<div class="r" style="left:0px;top:564px;width:690px;height:1px;background:#e0e0e0;"></div>
<span class="t" style="left:4.00px;top:566.34px;font-size:11px;color:#3c3c3c;transform:scaleX(0.9529);">Ready</span>
<span class="t" style="left:201.60px;top:566.34px;font-size:11px;color:#3c3c3c;transform:scaleX(0.9692);">Average: 27</span>
<span class="t" style="left:285.00px;top:566.34px;font-size:11px;color:#3c3c3c;transform:scaleX(1.0172);">Count: 4</span>
<span class="t" style="left:344.00px;top:566.34px;font-size:11px;color:#3c3c3c;transform:scaleX(0.9349);">Sum: 27</span>
<span class="t" style="left:649.50px;top:566.34px;font-size:11px;color:#3c3c3c;transform:scaleX(0.9135);">100%</span>
<div class="r" style="left:401px;top:565px;width:37px;height:18px;background:#c6c6c6;"></div>
<svg class="r" style="left:412.5px;top:568px;" width="13" height="13" viewBox="0 0 13 13"><rect x="0.5" y="0.5" width="12" height="12" fill="none" stroke="#555"/><path d="M0.5 4.5H12.5M0.5 8.5H12.5M4.5 0.5V12.5M8.5 0.5V12.5" stroke="#555"/></svg>
<svg class="r" style="left:450px;top:568px;" width="14" height="13" viewBox="0 0 14 13"><rect x="0.5" y="0.5" width="13" height="12" fill="none" stroke="#555"/><rect x="3.5" y="2.500" width="7" height="8" fill="none" stroke="#555"/><path d="M5 4.500H9M5 6.500H9M5 8.500H9" stroke="#555" stroke-width=".8"/></svg>
<svg class="r" style="left:488px;top:568px;" width="14" height="13" viewBox="0 0 14 13"><rect x="0.5" y="0.5" width="13" height="12" fill="none" stroke="#555"/><path d="M3.5 0.5V6.5H9.5V0.5M6.5 0.5V6.5" stroke="#555" fill="none"/></svg>
<div class="r" style="left:518px;top:574px;width:6px;height:2px;background:#555;"></div>
<div class="r" style="left:528px;top:575px;width:99px;height:1px;background:#999;"></div>
<div class="r" style="left:576px;top:569px;width:4px;height:11px;background:#666;"></div>
<div class="r" style="left:630px;top:574px;width:7px;height:2px;background:#555;"></div>
<div class="r" style="left:632.5px;top:571.5px;width:2px;height:7px;background:#555;"></div>
<div class="r" style="left:0px;top:0px;width:690px;height:1px;background:#0a1f12;"></div>
<div class="r" style="left:0px;top:0px;width:1px;height:584px;background:#0a1f12;"></div>
<div class="r" style="left:0px;top:583px;width:690px;height:1px;background:#111;"></div>
</body></html>
